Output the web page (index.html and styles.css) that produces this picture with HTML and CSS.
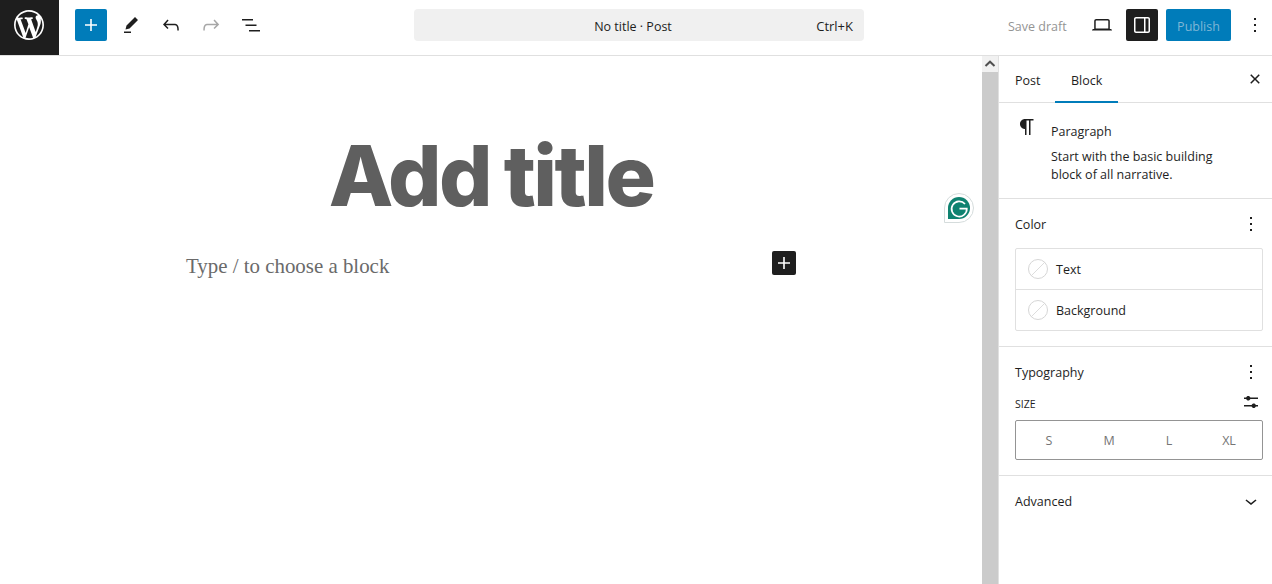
FILE: index.html
```html
<!DOCTYPE html>
<html lang="en">
<head>
<meta charset="utf-8">
<title>No title - Post</title>
<link rel="stylesheet" href="styles.css">
</head>
<body>
<header class="topbar">
  <a class="logo"><svg viewBox="0 0 20 20" width="30" height="30"><path fill="#fff" d="M20 10c0-5.51-4.49-10-10-10C4.48 0 0 4.49 0 10c0 5.52 4.48 10 10 10 5.51 0 10-4.48 10-10zM7.78 15.37L4.37 6.22c.55-.02 1.17-.08 1.17-.08.5-.06.44-1.13-.06-1.11 0 0-1.45.11-2.37.11-.18 0-.37 0-.58-.01C4.12 2.69 6.87 1.11 10 1.11c2.33 0 4.45.87 6.05 2.34-.68-.11-1.65.39-1.65 1.58 0 .74.45 1.36.9 2.1.35.61.55 1.36.55 2.46 0 1.49-1.4 5-1.4 5l-3.03-8.37c.54-.02.82-.17.82-.17.5-.05.44-1.25-.06-1.22 0 0-1.44.12-2.38.12-.87 0-2.33-.12-2.33-.12-.5-.03-.56 1.2-.06 1.22l.92.08 1.26 3.41zM17.41 10c.24-.64.74-1.87.43-4.25.7 1.29 1.05 2.71 1.05 4.25 0 3.29-1.73 6.24-4.4 7.78.97-2.59 1.94-5.2 2.92-7.78zM6.1 18.09C3.12 16.65 1.11 13.53 1.11 10c0-1.3.23-2.48.72-3.59C3.25 10.3 4.67 14.2 6.1 18.09zm4.03-6.63l2.58 6.98c-.86.29-1.76.45-2.71.45-.79 0-1.57-.11-2.29-.33.81-2.38 1.62-4.74 2.42-7.1z"/></svg></a>
  <div class="tools">
    <button class="icon-btn primary"><svg viewBox="0 0 24 24" width="24" height="24"><path d="M18 11.2h-5.2V6h-1.6v5.2H6v1.6h5.2V18h1.6v-5.2H18z"/></svg></button>
    <button class="icon-btn"><svg viewBox="0 0 24 24" width="24" height="24"><path d="m19 7-3-3-8.5 8.5-1 4 4-1L19 7Zm-7 11.5H5V20h7v-1.5Z"/></svg></button>
    <button class="icon-btn"><svg viewBox="0 0 24 24" width="24" height="24"><path d="M18.3 11.7c-.6-.6-1.4-.9-2.3-.9H6.7l2.9-3.3-1.1-1-4.5 5L8.5 16l1-1-2.7-2.7H16c.5 0 .9.2 1.3.5 1 1 1 3.4 1 4.5v.3h1.5v-.2c0-1.5 0-4.3-1.5-5.7z"/></svg></button>
    <button class="icon-btn muted"><svg viewBox="0 0 24 24" width="24" height="24"><path d="M15.6 6.5l-1.1 1 2.9 3.3H8c-.9 0-1.7.3-2.3.9-1.4 1.5-1.4 4.2-1.4 5.6v.2h1.5v-.3c0-1.1 0-3.5 1-4.5.3-.3.7-.5 1.3-.5h9.2L14.5 15l1.1 1.1 4.6-4.6-4.6-5z"/></svg></button>
    <button class="icon-btn"><svg viewBox="0 0 24 24" width="24" height="24"><path d="M3 6h11v1.5H3V6Zm3.5 5.5h11V13h-11v-1.5ZM21 17H10v1.5h11V17Z"/></svg></button>
  </div>
  <div class="command">
    <span class="command-title">No title · Post</span>
    <span class="command-key">Ctrl+K</span>
  </div>
  <div class="actions">
    <span class="save">Save draft</span>
    <button class="icon-btn laptop"><svg viewBox="0 0 24 24" width="24" height="24"><path d="M20.5 16h-.7V8c0-1.1-.9-2-2-2H6.2c-1.1 0-2 .9-2 2v8h-.7c-.8 0-1.5.7-1.5 1.5h20c0-.8-.7-1.5-1.5-1.5zM5.7 8c0-.3.2-.5.5-.5h11.6c.3 0 .5.2.5.5v7.6H5.7V8z"/></svg></button>
    <button class="icon-btn dark"><svg viewBox="0 0 24 24" width="24" height="24"><path d="M18 4H6c-1.1 0-2 .9-2 2v12c0 1.1.9 2 2 2h12c1.1 0 2-.9 2-2V6c0-1.1-.9-2-2-2zm-4 14.5H6c-.3 0-.5-.2-.5-.5V6c0-.3.2-.5.5-.5h8v13zm4.5-.5c0 .3-.2.5-.5.5h-2.5v-13H18c.3 0 .5.2.5.5v12z"/></svg></button>
    <button class="publish">Publish</button>
    <button class="icon-btn more"><svg viewBox="0 0 24 24" width="24" height="24"><path d="M13 19h-2v-2h2v2zm0-6h-2v-2h2v2zm0-6h-2V5h2v2z"/></svg></button>
  </div>
</header>

<div class="workspace">
  <main class="canvas">
    <h1 class="post-title">Add title</h1>
    <div class="para-row">
      <p class="para-hint">Type / to choose a block</p>
      <button class="inline-add"><svg viewBox="0 0 24 24" width="24" height="24"><path d="M18 11.2h-5.2V6h-1.6v5.2H6v1.6h5.2V18h1.6v-5.2H18z"/></svg></button>
    </div>
    <div class="grammarly"><svg viewBox="0 0 30 30" width="30" height="30"><path d="M15 .5a14.5 14.5 0 0 1 0 29H.5V15A14.5 14.5 0 0 1 15 .5Z" fill="#fff" stroke="#d5dcdc"/><path d="M15 4a11 11 0 0 1 0 22H4V15A11 11 0 0 1 15 4Z" fill="#0f8270"/><path d="M21 11a7.6 7.6 0 1 0 1.8 4.6H15.5" fill="none" stroke="#fff" stroke-width="1.7"/></svg></div>
  </main>
  <div class="scrollbar">
    <div class="scroll-up"><svg viewBox="0 0 16 16" width="16" height="16"><path d="M3.5 10 8 5.7 12.5 10" fill="none" stroke="#505050" stroke-width="2"/></svg></div>
    <div class="scroll-thumb"></div>
  </div>
  <aside class="sidebar">
    <div class="tabs">
      <span class="tab tab-post">Post</span>
      <span class="tab tab-block">Block</span>
      <svg class="close" viewBox="0 0 24 24" width="24" height="24"><path d="M12 13.06l3.712 3.713 1.061-1.06L13.061 12l3.712-3.712-1.06-1.06L12 10.938 8.288 7.227l-1.061 1.06L10.939 12l-3.712 3.712 1.06 1.061L12 13.061z"/></svg>
    </div>
    <section class="block-card">
      <svg class="para-icon" viewBox="0 0 24 24" width="24" height="24"><path d="m9.99609 14v-.2251l.00391.0001v6.225h1.5v-14.5h2.5v14.5h1.5v-14.5h3v-1.5h-8.50391c-2.76142 0-5 2.23858-5 5 0 2.7614 2.23858 5 5 5z"/></svg>
      <div class="card-text">
        <div class="card-name">Paragraph</div>
        <div class="card-desc">Start with the basic building block of all narrative.</div>
      </div>
    </section>
    <section class="panel color-panel">
      <div class="panel-head"><span>Color</span><svg viewBox="0 0 24 24" width="24" height="24"><path d="M13 19h-2v-2h2v2zm0-6h-2v-2h2v2zm0-6h-2V5h2v2z"/></svg></div>
      <div class="color-list">
        <div class="color-row"><span class="swatch"></span>Text</div>
        <div class="color-row"><span class="swatch"></span>Background</div>
      </div>
    </section>
    <section class="panel type-panel">
      <div class="panel-head"><span>Typography</span><svg viewBox="0 0 24 24" width="24" height="24"><path d="M13 19h-2v-2h2v2zm0-6h-2v-2h2v2zm0-6h-2V5h2v2z"/></svg></div>
      <div class="size-head"><span>SIZE</span><svg viewBox="0 0 24 24" width="24" height="24"><path d="m19 7.5h-7.628c-.3089-.87389-1.1423-1.5-2.122-1.5-.97966 0-1.81309.62611-2.12197 1.5h-2.12803v1.5h2.12803c.30888.87389 1.14231 1.5 2.12197 1.5.9797 0 1.8131-.62611 2.122-1.5h7.628z"/><path d="m19 15h-2.128c-.3089-.8739-1.1423-1.5-2.122-1.5s-1.8131.6261-2.122 1.5h-7.628v1.5h7.628c.3089.8739 1.1423 1.5 2.122 1.5s1.8131-.6261 2.122-1.5h2.128z"/></svg></div>
      <div class="sizes"><span>S</span><span>M</span><span>L</span><span>XL</span></div>
    </section>
    <section class="advanced">
      <span>Advanced</span>
      <svg viewBox="0 0 24 24" width="24" height="24"><path d="M17.5 11.6L12 16l-5.5-4.4.9-1.2L12 14l4.5-3.6 1 1.2z"/></svg>
    </section>
  </aside>
</div>
</body>
</html>
```
FILE: styles.css
```css
* { box-sizing: border-box; }
html, body { margin: 0; height: 100%; overflow: hidden; }
body { font-family: "Open Sans", "Noto Sans", sans-serif; font-size: 12.5px; color: #1e1e1e; background: #fff; }
button { font: inherit; border: 0; padding: 0; background: none; color: inherit; }
svg { display: block; fill: currentColor; flex: none; }

.topbar { display: flex; align-items: flex-start; height: 56px; border-bottom: 1px solid #e0e0e0; }
.logo { flex: none; width: 59px; height: 55px; padding: 0 1px 5px 0; background: #1e1e1e; display: flex; align-items: center; justify-content: center; }
.tools { display: flex; margin: 9px 0 0 16px; gap: 8px; }
.icon-btn { width: 32px; height: 32px; display: flex; align-items: center; justify-content: center; border-radius: 2px; }
.primary { background: #007cba; color: #fff; }
.muted { color: #a7a7a7; }
.command { width: 450px; height: 32px; margin: 9px 0 0 147px; padding: 2px 12px 0 0; background: #f0f0f0; border-radius: 4px; position: relative; display: flex; align-items: center; justify-content: center; }
.command-key { position: absolute; right: 11px; font-size: 13px; }
.actions { display: flex; align-items: center; margin: 9px 0 0 144px; }
.save { color: #949494; width: 78px; padding-top: 2px; }
.laptop { margin-right: 8px; }
.dark { background: #1e1e1e; color: #fff; }
.publish { width: 65px; height: 32px; margin-left: 8px; padding-top: 2px; background: #007cba; color: #7fb6d5; border-radius: 2px; }
.more { margin-left: 8px; }

.workspace { display: flex; height: 528px; }
.canvas { flex: 1; position: relative; min-width: 0; }
.post-title { margin: 69px 0 0; text-align: center; font-family: Inter, sans-serif; font-weight: 775; font-size: 84px; line-height: 102px; letter-spacing: -2.6px; word-spacing: -2px; color: #5f5f5f; }
.para-row { width: 610px; margin: 24px auto 0; display: flex; justify-content: space-between; align-items: flex-start; }
.para-hint { margin: 0; font-family: "Liberation Serif", serif; font-size: 20.9px; line-height: 30px; color: #6a6a6a; }
.inline-add { width: 24px; height: 24px; background: #1e1e1e; color: #fff; border-radius: 2px; }
.grammarly { position: absolute; left: 944px; top: 137px; }
.scrollbar { width: 16px; background: #cbcbcb; }
.scroll-up { height: 16px; background: #f1f1f1; }
.scroll-thumb { height: 100%; }

.sidebar { width: 274px; border-left: 1px solid #e0e0e0; }
.tabs { display: flex; height: 47px; border-bottom: 1px solid #e0e0e0; position: relative; align-items: center; }
.tab { height: 47px; padding: 2px 0 0 16px; display: flex; align-items: center; }
.tab-post { width: 56px; }
.tab-block { width: 63px; box-shadow: inset 0 -2px 0 #007cba; }
.close { position: absolute; right: 5px; top: 11px; }
.block-card { display: flex; height: 96px; padding: 16px; border-bottom: 1px solid #e0e0e0; }
.para-icon { margin-right: 12px; margin-top: -4px; }
.card-name { margin-top: 4px; line-height: 18px; }
.card-desc { margin-top: 7px; line-height: 18px; width: 175px; }
.panel { padding: 0 9px 0 16px; border-bottom: 1px solid #e0e0e0; }
.panel-head { display: flex; justify-content: space-between; align-items: center; height: 24px; }
.color-panel { height: 148px; padding-top: 13px; }
.color-list { margin-top: 12px; border: 1px solid #e0e0e0; border-radius: 2px; }
.color-row { height: 40px; display: flex; align-items: center; gap: 8px; padding-left: 12px; }
.color-row + .color-row { height: 41px; border-top: 1px solid #e0e0e0; }
.swatch { width: 20px; height: 20px; border-radius: 50%; border: 1px solid #d6d6d6; background: linear-gradient(-45deg, transparent 48%, #ddd 48%, #ddd 52%, transparent 52%); }
.type-panel { height: 129px; padding-top: 13px; }
.size-head { display: flex; justify-content: space-between; align-items: center; height: 24px; margin-top: 8px; font-size: 10.5px; }
.size-head svg { margin-top: -4px; }
.sizes { display: flex; height: 40px; margin-top: 4px; padding: 0 3px; border: 1px solid #949494; border-radius: 2px; color: #757575; }
.sizes span { flex: 1; display: flex; align-items: center; justify-content: center; }
.advanced { display: flex; justify-content: space-between; align-items: center; height: 50px; padding: 0 9px 0 16px; }
```
